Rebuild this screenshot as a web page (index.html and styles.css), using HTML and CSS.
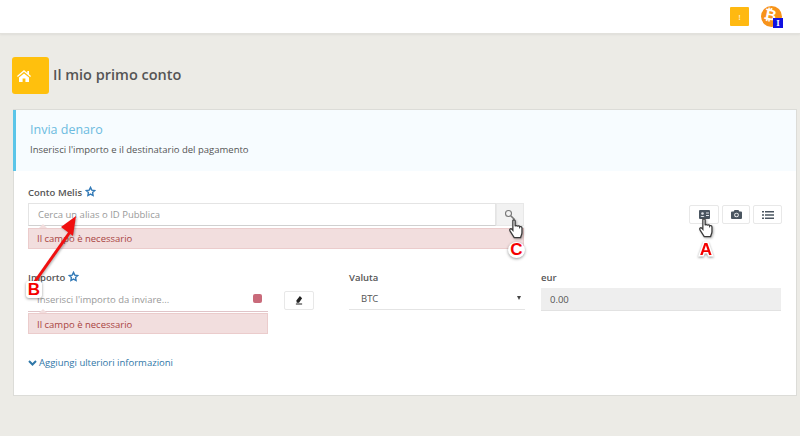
FILE: index.html
```html
<!DOCTYPE html>
<html lang="it">
<head>
<meta charset="utf-8">
<title>Invia denaro</title>
<link rel="stylesheet" href="styles.css">
</head>
<body>
<header class="topbar">
  <span class="notif">!</span>
  <span class="avatar">
    <span class="btc">₿</span>
    <span class="badge">I</span>
  </span>
</header>
<div class="title-row">
  <span class="home">
    <svg width="14" height="12" viewBox="0 0 14 12"><path fill="#fff" d="M7 0 0 6l.8 1L7 1.8 13.2 7l.8-1-2-1.700V1h-1.700v2L7 0zM2 7.600V12h3.600V8.500h2.800V12H12V7.600L7 3.400 2 7.600z"/></svg>
  </span>
  <h1>Il mio primo conto</h1>
</div>
<main class="panel">
  <section class="intro">
    <h2>Invia denaro</h2>
    <p>Inserisci l'importo e il destinatario del pagamento</p>
  </section>
  <form class="form">
    <div class="row-one">
      <div class="account">
        <label class="label">Conto Melis <svg class="star" width="11" height="11" viewBox="0 0 24 24"><path fill="none" stroke="#337ab7" stroke-width="3" d="m12 3 2.800 5.900 6.400.9-4.600 4.500 1.100 6.400-5.700-3-5.700 3 1.100-6.400-4.600-4.500 6.400-.9z"/></svg></label>
        <div class="search">
          <span class="search-input">Cerca un alias o ID Pubblica</span>
          <span class="search-btn"><svg width="12" height="12" viewBox="0 0 12 12"><circle cx="4.500" cy="4.500" r="3" fill="none" stroke="#777" stroke-width="1.100"/><path d="m7 7 3.500 3.500" stroke="#777" stroke-width="1.600"/></svg></span>
        </div>
        <div class="error">Il campo è necessario</div>
      </div>
      <div class="tools">
        <span class="tool"><svg width="11" height="9" viewBox="0 0 11 9"><rect width="11" height="9" rx="1" fill="#4a5560"/><circle cx="3.500" cy="3.500" r="1.300" fill="#dfe3e8"/><path d="M1.500 7c0-1.500 4-1.500 4 0zM7 2.500h3v1H7zM7 5h3v1H7z" fill="#dfe3e8"/></svg></span>
        <span class="tool"><svg width="11" height="9" viewBox="0 0 11 9"><path fill="#4a5560" d="M3.500 0h4l.8 1.500H10a1 1 0 0 1 1 1V8a1 1 0 0 1-1 1H1a1 1 0 0 1-1-1V2.500a1 1 0 0 1 1-1h1.700z"/><circle cx="5.500" cy="5" r="2.300" fill="#fff"/><circle cx="5.500" cy="5" r="1.400" fill="#4a5560"/></svg></span>
        <span class="tool"><svg width="12" height="8" viewBox="0 0 12 8"><path fill="#4a5560" d="M0 0h2v1.600H0zM3 0h9v1.600H3zM0 3.200h2v1.600H0zM3 3.200h9v1.600H3zM0 6.400h2V8H0zM3 6.400h9V8H3z"/></svg></span>
      </div>
    </div>
    <div class="row-two">
      <div class="amount">
        <label class="label">Importo <svg class="star" width="11" height="11" viewBox="0 0 24 24"><path fill="none" stroke="#337ab7" stroke-width="3" d="m12 3 2.800 5.900 6.400.9-4.600 4.500 1.100 6.400-5.700-3-5.700 3 1.100-6.400-4.600-4.500 6.400-.9z"/></svg></label>
        <div class="amount-input"><span>Inserisci l'importo da inviare...</span><i class="flag"></i></div>
        <div class="error">Il campo è necessario</div>
      </div>
      <span class="eraser"><svg width="8" height="9" viewBox="0 0 9 10"><path fill="#222" d="M5.500 0 8 2.500 4.500 7.500H2L1.500 5zM1 8.500h7v1H1z"/></svg></span>
      <div class="currency">
        <label class="label">Valuta</label>
        <div class="select"><span>BTC</span><i class="caret"></i></div>
      </div>
      <div class="fiat">
        <label class="label">eur</label>
        <div class="fiat-value">0.00</div>
      </div>
    </div>
    <a class="more"><svg width="9" height="6" viewBox="0 0 9 6"><path fill="none" stroke="#2f77a8" stroke-width="2" d="m1 1 3.500 3.500L8 1"/></svg>Aggiungi ulteriori informazioni</a>
  </form>
</main>

<svg class="arrow" width="70" height="90" viewBox="0 0 70 90"><path d="M10 76 46 25" stroke="#f01010" stroke-width="3"/><path d="M52 9 37 20 49 29z" fill="#f01010"/></svg>
<span class="mark mark-b">B</span>
<span class="mark mark-c">C</span>
<span class="mark mark-a">A</span>
<svg class="hand hand-c" width="17" height="20" viewBox="0 0 18 22"><path fill="#fff" stroke="#3a3a3a" stroke-width="1.400" d="M5 2c0-1.500 2.500-1.500 2.500 0v6c.5-1 2.500-1 2.500.3.500-1 2.500-.8 2.500.5.500-.8 2.500-.5 2.500 1V15c0 2-1 3-1.500 5.500H6.500L1.800 13c-1-1.500.8-3 2-1.800L5 12.500z"/></svg>
<svg class="hand hand-a" width="17" height="20" viewBox="0 0 18 22"><path fill="#fff" stroke="#3a3a3a" stroke-width="1.400" d="M5 2c0-1.500 2.500-1.500 2.500 0v6c.5-1 2.500-1 2.500.3.500-1 2.500-.8 2.500.5.500-.8 2.500-.5 2.500 1V15c0 2-1 3-1.500 5.500H6.500L1.800 13c-1-1.500.8-3 2-1.800L5 12.500z"/></svg>
</body>
</html>
```
FILE: styles.css
```css
* { box-sizing: border-box; }
html, body { height: 100%; }
body {
  margin: 0;
  position: relative;
  overflow: hidden;
  background: #ecebe6;
  font-family: "Open Sans", "Liberation Sans", sans-serif;
  color: #555;
  font-size: 10px;
}
.topbar {
  height: 34px;
  background: #fff;
  border-bottom: 1px solid #e2e1dc;
  box-shadow: 0 1px 2px rgba(0,0,0,.06);
  display: flex;
  align-items: center;
  justify-content: flex-end;
  padding: 0 18px 1px 0;
  gap: 12px;
}
.notif {
  width: 19px;
  height: 19px;
  background: #ffb911;
  border-radius: 1px;
  color: #fff;
  font-size: 8px;
  display: flex;
  align-items: center;
  justify-content: center;
}
.avatar {
  position: relative;
  width: 21px;
  height: 21px;
  border-radius: 50%;
  background: #f7931a;
  display: flex;
  align-items: center;
  justify-content: center;
}
.btc {
  color: #fff;
  font: bold 15px "DejaVu Sans", sans-serif;
  transform: rotate(12deg) translate(-1px, -1px);
}
.badge {
  position: absolute;
  right: -1px;
  bottom: -1px;
  width: 10px;
  height: 10px;
  background: #1010e0;
  color: #fff;
  font: bold 9px/10px "Liberation Serif", serif;
  text-align: center;
}
.title-row {
  display: flex;
  align-items: center;
  gap: 4px;
  margin: 23px 0 15px 12px;
}
.home {
  width: 37px;
  height: 37px;
  background: #ffc00d;
  border-radius: 3px;
  display: flex;
  align-items: center;
  padding-left: 5px;
}
h1 {
  margin: 0 0 2px;
  font-size: 14.500px;
  font-weight: 600;
  color: #555;
  line-height: 20px;
}
.panel {
  margin: 0 3px 0 13px;
  height: 287px;
  background: #fff;
  border: 1px solid #dcdcd8;
}
.intro {
  height: 61px;
  margin-left: -1px;
  background: #f7fcff;
  border-left: 3px solid #5bc5e8;
  padding: 11px 0 0 14px;
}
.intro h2 {
  margin: 0;
  font-size: 12.500px;
  font-weight: 400;
  line-height: 18px;
  color: #6cbbe0;
}
.intro p {
  margin: 4px 0 0;
  font-size: 9.500px;
  line-height: 14px;
  color: #555;
}
.form { padding: 15px 14px 0; }
.label {
  display: block;
  font-size: 9.500px;
  font-weight: 600;
  line-height: 14px;
  color: #555;
}
.star { vertical-align: -1px; }
.row-one { display: flex; justify-content: space-between; }
.account { width: 496px; }
.search {
  display: flex;
  height: 23px;
  margin-top: 3px;
}
.search-input {
  flex: 1;
  border: 1px solid #e4e4e4;
  border-bottom-color: #d0d0d0;
  padding-left: 9px;
  font-size: 9.500px;
  line-height: 21px;
  color: #999;
}
.search-btn {
  width: 28px;
  background: #f2f2f2;
  border: 1px solid #e8e8e8;
  display: flex;
  align-items: center;
  justify-content: center;
}
.error {
  position: relative;
  height: 21px;
  margin-top: 2px;
  background: #f2dede;
  border: 1px solid #ebcccc;
  padding-left: 8px;
  font-size: 9.500px;
  line-height: 20px;
  color: #a94442;
}
.error::before {
  content: "";
  position: absolute;
  left: 10px;
  top: -5px;
  border: 4px solid transparent;
  border-top: 0;
  border-bottom: 4px solid #f2dede;
}
.tools { display: flex; gap: 3px; margin: 19px 0 0; height: 19px; }
.tool {
  width: 30px;
  height: 19px;
  background: #fff;
  border: 1px solid #e8e8e8;
  border-radius: 2px;
  display: flex;
  align-items: center;
  justify-content: center;
}
.tool + .tool { width: 28px; }
.tool + .tool + .tool { width: 29px; }
.row-two { display: flex; margin-top: 22px; }
.amount { width: 240px; }
.amount-input {
  height: 24px;
  margin-top: 3px;
  border-bottom: 1px solid #e0c4c8;
  display: flex;
  align-items: center;
  justify-content: space-between;
  padding: 0 6px 0 9px;
  font-size: 9.500px;
  color: #999;
}
.flag {
  width: 9px;
  height: 9px;
  background: #c96a7a;
  border-radius: 2px;
  margin-bottom: 3px;
}
.amount .error { margin-top: 1px; line-height: 21px; }
.eraser {
  width: 30px;
  height: 19px;
  margin: 20px 35px 0 16px;
  border: 1px solid #e8e8e8;
  border-radius: 2px;
  display: flex;
  align-items: center;
  justify-content: center;
}
.currency { width: 176px; margin-right: 16px; }
.select {
  height: 23px;
  margin-top: 2px;
  border-bottom: 1px solid #e4e4e4;
  display: flex;
  align-items: center;
  justify-content: space-between;
  padding: 0 4px 0 12px;
  font-size: 9.500px;
  color: #555;
}
.caret {
  width: 0;
  height: 0;
  border: 2.500px solid transparent;
  border-top: 4px solid #444;
  border-bottom: 0;
}
.fiat { width: 240px; }
.fiat-value {
  height: 23px;
  margin-top: 3px;
  background: #eee;
  border-bottom: 1px solid #e2e2e2;
  padding-left: 9px;
  font-size: 9.500px;
  line-height: 23px;
  color: #555;
}
.more {
  display: flex;
  align-items: center;
  gap: 2px;
  margin-top: 22px;
  font-size: 9.500px;
  line-height: 14px;
  color: #2f77a8;
}
.arrow {
  position: absolute;
  left: 24px;
  top: 207px;
  filter: drop-shadow(1px 1px 1px rgba(0,0,0,.3));
}
.mark {
  position: absolute;
  color: #f40000;
  font: bold 17px/18px "Liberation Sans", sans-serif;
  text-align: center;
}
.mark-b {
  left: 26px; top: 281px; width: 16px; height: 17px;
  background: #fff; border-radius: 3px; box-shadow: 0 1px 3px rgba(0,0,0,.4);
}
.mark-c {
  left: 508px; top: 242px; width: 17px; height: 16px; line-height: 16px;
  background: #fff; border-radius: 50%; box-shadow: 0 1px 3px rgba(0,0,0,.4);
}
.mark-a {
  left: 698px; top: 241px; width: 16px;
  -webkit-text-stroke: 3px #fff;
  paint-order: stroke fill;
  filter: drop-shadow(0 1px 1px rgba(0,0,0,.4));
}
.hand { position: absolute; filter: drop-shadow(1px 1px 1px rgba(0,0,0,.3)); }
.hand-c { left: 508px; top: 219px; }
.hand-a { left: 698px; top: 218px; }
```
